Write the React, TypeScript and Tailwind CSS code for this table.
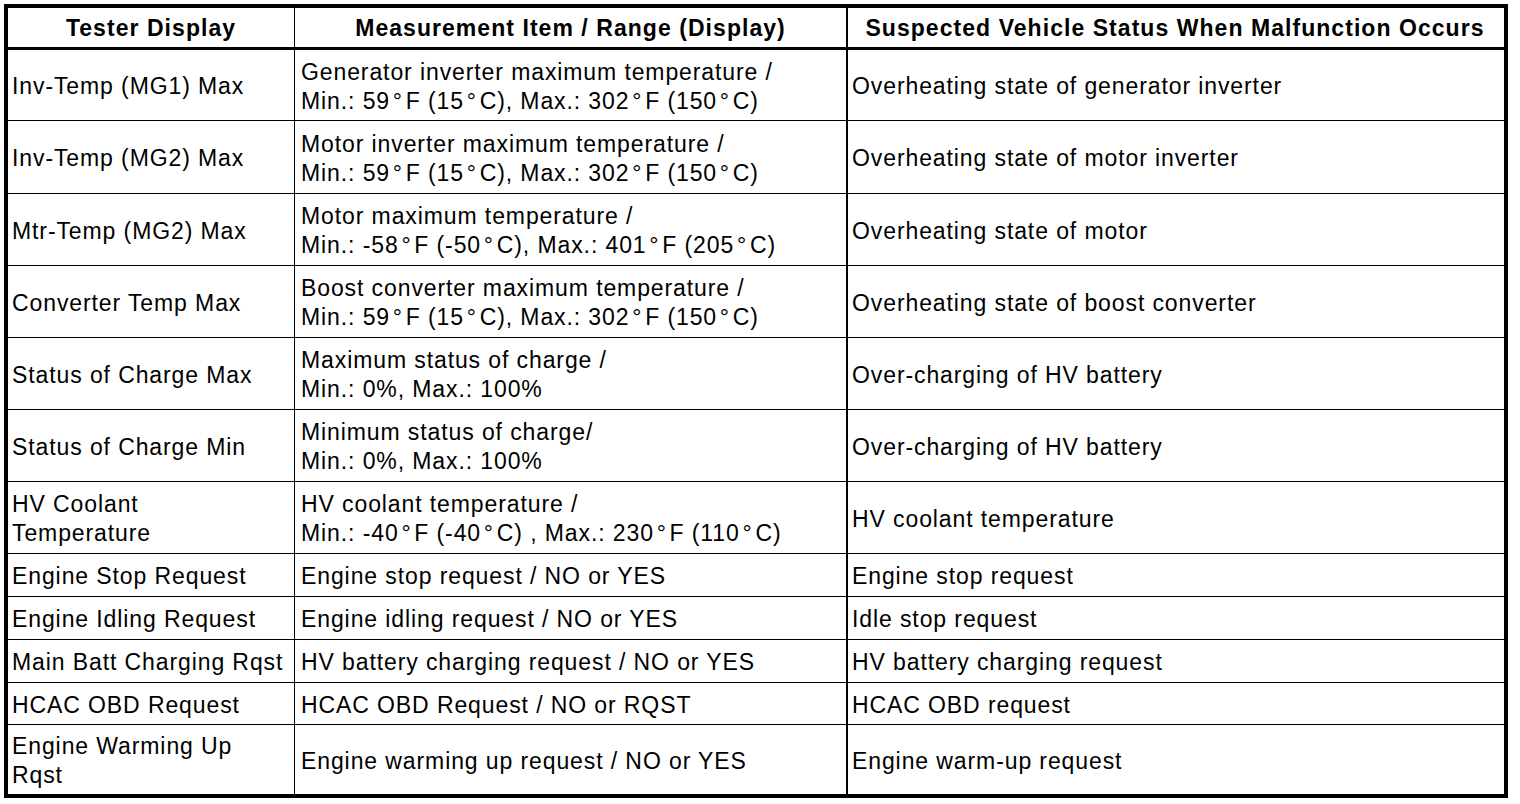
const deg = "\u200a°\u200a"

type Row = {
  tester: string[]
  range: string[]
  status: string
  h: string
}

const rows: Row[] = [
  {
    tester: ["Inv-Temp (MG1) Max"],
    range: ["Generator inverter maximum temperature /", `Min.: 59${deg}F (15${deg}C), Max.: 302${deg}F (150${deg}C)`],
    status: "Overheating state of generator inverter",
    h: "h-[71px]",
  },
  {
    tester: ["Inv-Temp (MG2) Max"],
    range: ["Motor inverter maximum temperature /", `Min.: 59${deg}F (15${deg}C), Max.: 302${deg}F (150${deg}C)`],
    status: "Overheating state of motor inverter",
    h: "h-[73px]",
  },
  {
    tester: ["Mtr-Temp (MG2) Max"],
    range: ["Motor maximum temperature /", `Min.: -58${deg}F (-50${deg}C), Max.: 401${deg}F (205${deg}C)`],
    status: "Overheating state of motor",
    h: "h-[72px]",
  },
  {
    tester: ["Converter Temp Max"],
    range: ["Boost converter maximum temperature /", `Min.: 59${deg}F (15${deg}C), Max.: 302${deg}F (150${deg}C)`],
    status: "Overheating state of boost converter",
    h: "h-[72px]",
  },
  {
    tester: ["Status of Charge Max"],
    range: ["Maximum status of charge /", "Min.: 0%, Max.: 100%"],
    status: "Over-charging of HV battery",
    h: "h-[72px]",
  },
  {
    tester: ["Status of Charge Min"],
    range: ["Minimum status of charge/", "Min.: 0%, Max.: 100%"],
    status: "Over-charging of HV battery",
    h: "h-[72px]",
  },
  {
    tester: ["HV Coolant", "Temperature"],
    range: ["HV coolant temperature /", `Min.: -40${deg}F (-40${deg}C) , Max.: 230${deg}F (110${deg}C)`],
    status: "HV coolant temperature",
    h: "h-[72px]",
  },
  {
    tester: ["Engine Stop Request"],
    range: ["Engine stop request / NO or YES"],
    status: "Engine stop request",
    h: "h-[43px]",
  },
  {
    tester: ["Engine Idling Request"],
    range: ["Engine idling request / NO or YES"],
    status: "Idle stop request",
    h: "h-[43px]",
  },
  {
    tester: ["Main Batt Charging Rqst"],
    range: ["HV battery charging request / NO or YES"],
    status: "HV battery charging request",
    h: "h-[43px]",
  },
  {
    tester: ["HCAC OBD Request"],
    range: ["HCAC OBD Request / NO or RQST"],
    status: "HCAC OBD request",
    h: "h-[42px]",
  },
  {
    tester: ["Engine Warming Up", "Rqst"],
    range: ["Engine warming up request / NO or YES"],
    status: "Engine warm-up request",
    h: "h-[69px]",
  },
]

function Lines({ lines }: { lines: string[] }) {
  return (
    <div>
      {lines.map((l, i) => (
        <div key={i} className="whitespace-nowrap">
          {l}
        </div>
      ))}
    </div>
  )
}

export default function App() {
  return (
    <div
      className="w-[1520px] h-[804px] bg-white text-black p-[4px]"
      style={{ fontFamily: '"Liberation Sans", Arial, Helvetica, sans-serif' }}
    >
      <div className="w-[1504px] h-[794px] border-[4px] border-black text-[23px] leading-[29px] tracking-[0.9px]">
        {/* header */}
        <div className="grid grid-cols-[287px_553px_1fr] h-[42px] border-b-[3px] border-black font-bold tracking-[1.05px]">
          <div className="border-r border-black flex items-center justify-center pt-[2px]">Tester Display</div>
          <div className="border-r-2 border-black flex items-center justify-center pt-[2px]">
            Measurement Item / Range (Display)
          </div>
          <div className="flex items-center justify-center pr-[2px] pt-[2px]">
            Suspected Vehicle Status When Malfunction Occurs
          </div>
        </div>

        {rows.map((r, i) => (
          <div
            key={i}
            className={`grid grid-cols-[287px_553px_1fr] ${r.h} ${i < rows.length - 1 ? "border-b border-black" : ""}`}
          >
            <div className="border-r border-black flex items-center pl-[4px] pt-[3px]">
              <Lines lines={r.tester} />
            </div>
            <div className="border-r-2 border-black flex items-center pl-[6px] pt-[3px]">
              <Lines lines={r.range} />
            </div>
            <div className="flex items-center pl-[4px] pt-[3px]">{r.status}</div>
          </div>
        ))}
      </div>
    </div>
  )
}
